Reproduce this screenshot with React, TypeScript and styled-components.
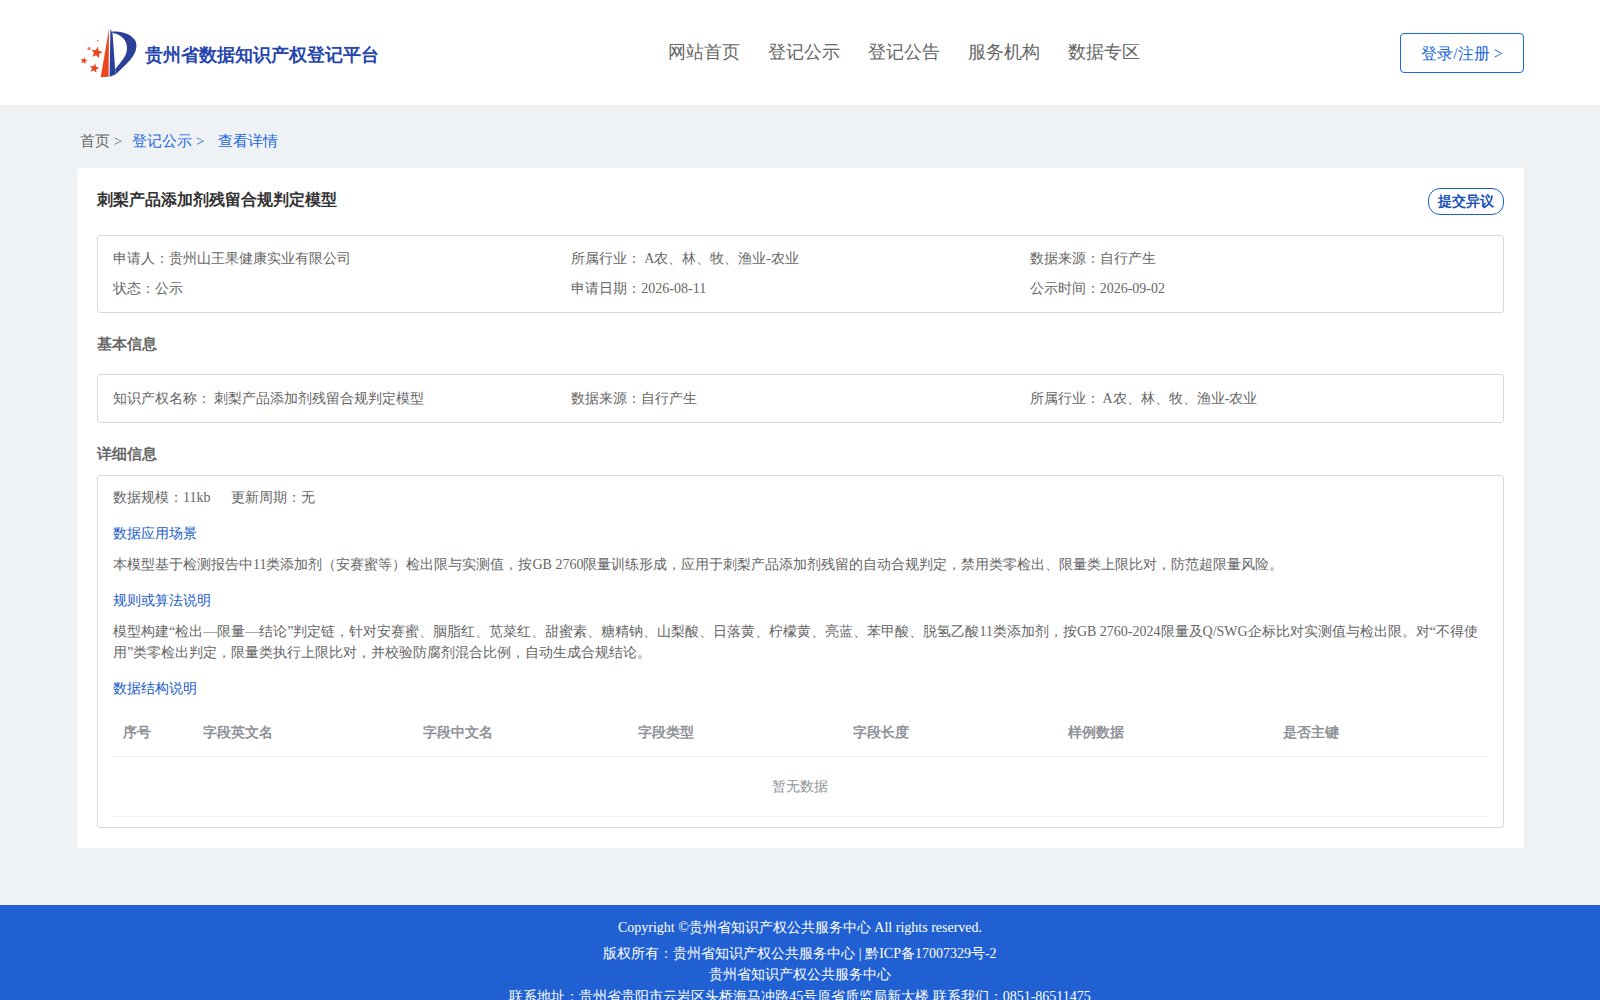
import React from 'react';
import styled, { createGlobalStyle } from 'styled-components';

const GlobalStyle = createGlobalStyle`
  html, body { margin: 0; padding: 0; background: #eff2f5; }
  body {
    font-family: "Liberation Serif", serif;
    font-size: 14px;
    color: #666;
  }
`;

const Page = styled.div`
  height: 1000px;
  overflow: hidden;
  display: flex;
  flex-direction: column;
`;

const Header = styled.header`
  height: 105px;
  background: #fff;
  padding: 0 76px 0 80px;
  display: flex;
  align-items: center;
  justify-content: space-between;
  flex-shrink: 0;
`;

const Brand = styled.div`
  width: 328px;
  display: flex;
  align-items: center;
  gap: 8px;
  padding-top: 4px;
`;

const LogoMark = styled.svg`
  margin-top: -4px;
  flex-shrink: 0;
`;

const BrandName = styled.span`
  font-size: 18px;
  font-weight: 700;
  color: #2646ad;
  white-space: nowrap;
`;

const Nav = styled.nav`
  display: flex;
  gap: 28px;
  padding-bottom: 1px;
`;

const NavItem = styled.a`
  font-size: 18px;
  color: #666;
`;

const LoginButton = styled.button`
  width: 124px;
  height: 40px;
  padding: 3px 0 0;
  border: 1px solid #1a66e0;
  border-radius: 4px;
  background: #fff;
  color: #1a66e0;
  font: inherit;
  font-size: 16px;
`;

const Main = styled.main`
  flex: 1;
  padding: 0 76px 0 77px;
`;

const Breadcrumb = styled.div`
  height: 63px;
  padding: 10px 0 0 3px;
  box-sizing: border-box;
  display: flex;
  align-items: center;
  font-size: 15px;
`;

const Crumb = styled.span<{ $active?: boolean }>`
  color: ${props => (props.$active ? '#1a66e0' : '#666')};
  margin-right: ${props => (props.$active ? '14px' : '10px')};
`;

const Card = styled.section`
  background: #fff;
  padding: 20px;
`;

const TitleRow = styled.div`
  display: flex;
  justify-content: space-between;
  align-items: flex-start;
  margin-bottom: 20px;
`;

const Title = styled.h1`
  margin: 0;
  font-size: 16px;
  line-height: 24px;
  font-weight: 700;
  color: #333;
`;

const ObjectionButton = styled.button`
  width: 76px;
  height: 27px;
  padding: 0;
  border: 1px solid #1a5cc8;
  border-radius: 12px;
  background: #fff;
  color: #1a52b8;
  font: inherit;
  font-size: 14px;
  font-weight: 700;
`;

const Panel = styled.div`
  border: 1px solid #d9d9d9;
  border-radius: 3px;
  padding: 12px 15px;
`;

const BasicPanel = styled(Panel)`
  padding-top: 13px;
`;

const DetailPanel = styled(Panel)`
  padding-bottom: 10px;
`;

const InfoGrid = styled.div`
  display: grid;
  grid-template-columns: repeat(3, 1fr);
  row-gap: 8px;
  line-height: 22px;
  word-spacing: -0.6px;
`;

const SectionHead = styled.h2<{ $tight?: boolean }>`
  margin: 0;
  padding: 20px 0 ${props => (props.$tight ? '10px' : '19px')};
  font-size: 14.5px;
  line-height: 22px;
  font-weight: 700;
  color: #666;
`;

const MetaRow = styled.div`
  display: flex;
  gap: 21px;
  line-height: 20px;
`;

const SubHead = styled.h3`
  margin: 15px 0 9px;
  font-size: 14px;
  line-height: 22px;
  font-weight: 400;
  color: #1a5cc8;
`;

const Paragraph = styled.p`
  margin: 0;
  font-size: 14px;
  line-height: 21px;
  color: #666;
`;

const Table = styled.div`
  margin-top: 9px;
`;

const TableHead = styled.div`
  display: grid;
  grid-template-columns: 80px 220px 215px 215px 215px 215px 1fr;
  height: 47px;
  align-items: center;
  border-bottom: 1px solid #ebeef5;
  font-weight: 700;
  color: #909399;
`;

const HeadCell = styled.div`
  padding-left: 10px;
`;

const EmptyRow = styled.div`
  height: 59px;
  display: flex;
  align-items: center;
  justify-content: center;
  padding-right: 1px;
  border-bottom: 1px solid #ebeef5;
  color: #909399;
`;

const Footer = styled.footer`
  margin-top: 57px;
  flex-shrink: 0;
  background: #2060d2;
  color: #fff;
  text-align: center;
  padding-top: 12px;
  font-size: 14px;
  line-height: 21.5px;
`;

const Copyright = styled.div`
  margin-bottom: 4px;
`;

const starPoints = (cx: number, cy: number, r: number) =>
  Array.from({ length: 10 }, (_, i) => {
    const radius = i % 2 === 0 ? r : r * 0.45;
    const angle = -Math.PI / 2 + 0.2 + (i * Math.PI) / 5;
    return `${cx + radius * Math.cos(angle)},${cy + radius * Math.sin(angle)}`;
  }).join(' ');

const Logo = () => (
  <LogoMark width="57" height="50" viewBox="0 0 57 50">
    <path d="M29 1 L20.7 49.3 L28.6 48.7 Z" fill="#e8481c" />
    <path d="M30.4 1 L29.6 48.7 L35.5 46.5 L32.5 5 Z" fill="#2a3f96" />
    <path d="M32 3.5 C40 3 50 5 55 12 C58 18 56 25 51 31 C47 36 41 41 35.5 46.5 L35.3 41 C39 36 44 31 46 26 C48 20 47 14 43 10 C40 7 36 5.5 32.5 5 Z" fill="#2a3f96" />
    <polygon points={starPoints(16.7, 24.7, 6)} fill="#e8481c" />
    <polygon points={starPoints(14.3, 40.3, 5)} fill="#e8481c" />
    <polygon points={starPoints(4, 32.7, 3.6)} fill="#e8481c" />
    <circle cx="9" cy="20.7" r="1.6" fill="#ee7a55" />
    <circle cx="17.7" cy="12.7" r="1" fill="#ee8a6a" />
  </LogoMark>
);

const navItems = ['网站首页', '登记公示', '登记公告', '服务机构', '数据专区'];
const columns = ['序号', '字段英文名', '字段中文名', '字段类型', '字段长度', '样例数据', '是否主键'];

export default function App() {
  return (
    <Page>
      <GlobalStyle />
      <Header>
        <Brand>
          <Logo />
          <BrandName>贵州省数据知识产权登记平台</BrandName>
        </Brand>
        <Nav>
          {navItems.map(item => <NavItem key={item}>{item}</NavItem>)}
        </Nav>
        <LoginButton>登录/注册 &gt;</LoginButton>
      </Header>
      <Main>
        <Breadcrumb>
          <Crumb>首页 &gt;</Crumb>
          <Crumb $active>登记公示 &gt;</Crumb>
          <Crumb $active>查看详情</Crumb>
        </Breadcrumb>
        <Card>
          <TitleRow>
            <Title>刺梨产品添加剂残留合规判定模型</Title>
            <ObjectionButton>提交异议</ObjectionButton>
          </TitleRow>
          <Panel>
            <InfoGrid>
              <div>申请人：贵州山王果健康实业有限公司</div>
              <div>所属行业： A农、林、牧、渔业-农业</div>
              <div>数据来源：自行产生</div>
              <div>状态：公示</div>
              <div>申请日期：2026-08-11</div>
              <div>公示时间：2026-09-02</div>
            </InfoGrid>
          </Panel>
          <SectionHead>基本信息</SectionHead>
          <BasicPanel>
            <InfoGrid>
              <div>知识产权名称： 刺梨产品添加剂残留合规判定模型</div>
              <div>数据来源：自行产生</div>
              <div>所属行业： A农、林、牧、渔业-农业</div>
            </InfoGrid>
          </BasicPanel>
          <SectionHead $tight>详细信息</SectionHead>
          <DetailPanel>
            <MetaRow>
              <span>数据规模：11kb</span>
              <span>更新周期：无</span>
            </MetaRow>
            <SubHead>数据应用场景</SubHead>
            <Paragraph>本模型基于检测报告中11类添加剂（安赛蜜等）检出限与实测值，按GB 2760限量训练形成，应用于刺梨产品添加剂残留的自动合规判定，禁用类零检出、限量类上限比对，防范超限量风险。</Paragraph>
            <SubHead>规则或算法说明</SubHead>
            <Paragraph>模型构建“检出—限量—结论”判定链，针对安赛蜜、胭脂红、苋菜红、甜蜜素、糖精钠、山梨酸、日落黄、柠檬黄、亮蓝、苯甲酸、脱氢乙酸11类添加剂，按GB 2760-2024限量及Q/SWG企标比对实测值与检出限。对“不得使用”类零检出判定，限量类执行上限比对，并校验防腐剂混合比例，自动生成合规结论。</Paragraph>
            <SubHead>数据结构说明</SubHead>
            <Table>
              <TableHead>
                {columns.map(col => <HeadCell key={col}>{col}</HeadCell>)}
              </TableHead>
              <EmptyRow>暂无数据</EmptyRow>
            </Table>
          </DetailPanel>
        </Card>
      </Main>
      <Footer>
        <Copyright>Copyright ©贵州省知识产权公共服务中心 All rights reserved.</Copyright>
        <div>版权所有：贵州省知识产权公共服务中心 | 黔ICP备17007329号-2</div>
        <div>贵州省知识产权公共服务中心</div>
        <div>联系地址：贵州省贵阳市云岩区头桥海马冲路45号原省质监局新大楼 联系我们：0851-86511475</div>
      </Footer>
    </Page>
  );
}
